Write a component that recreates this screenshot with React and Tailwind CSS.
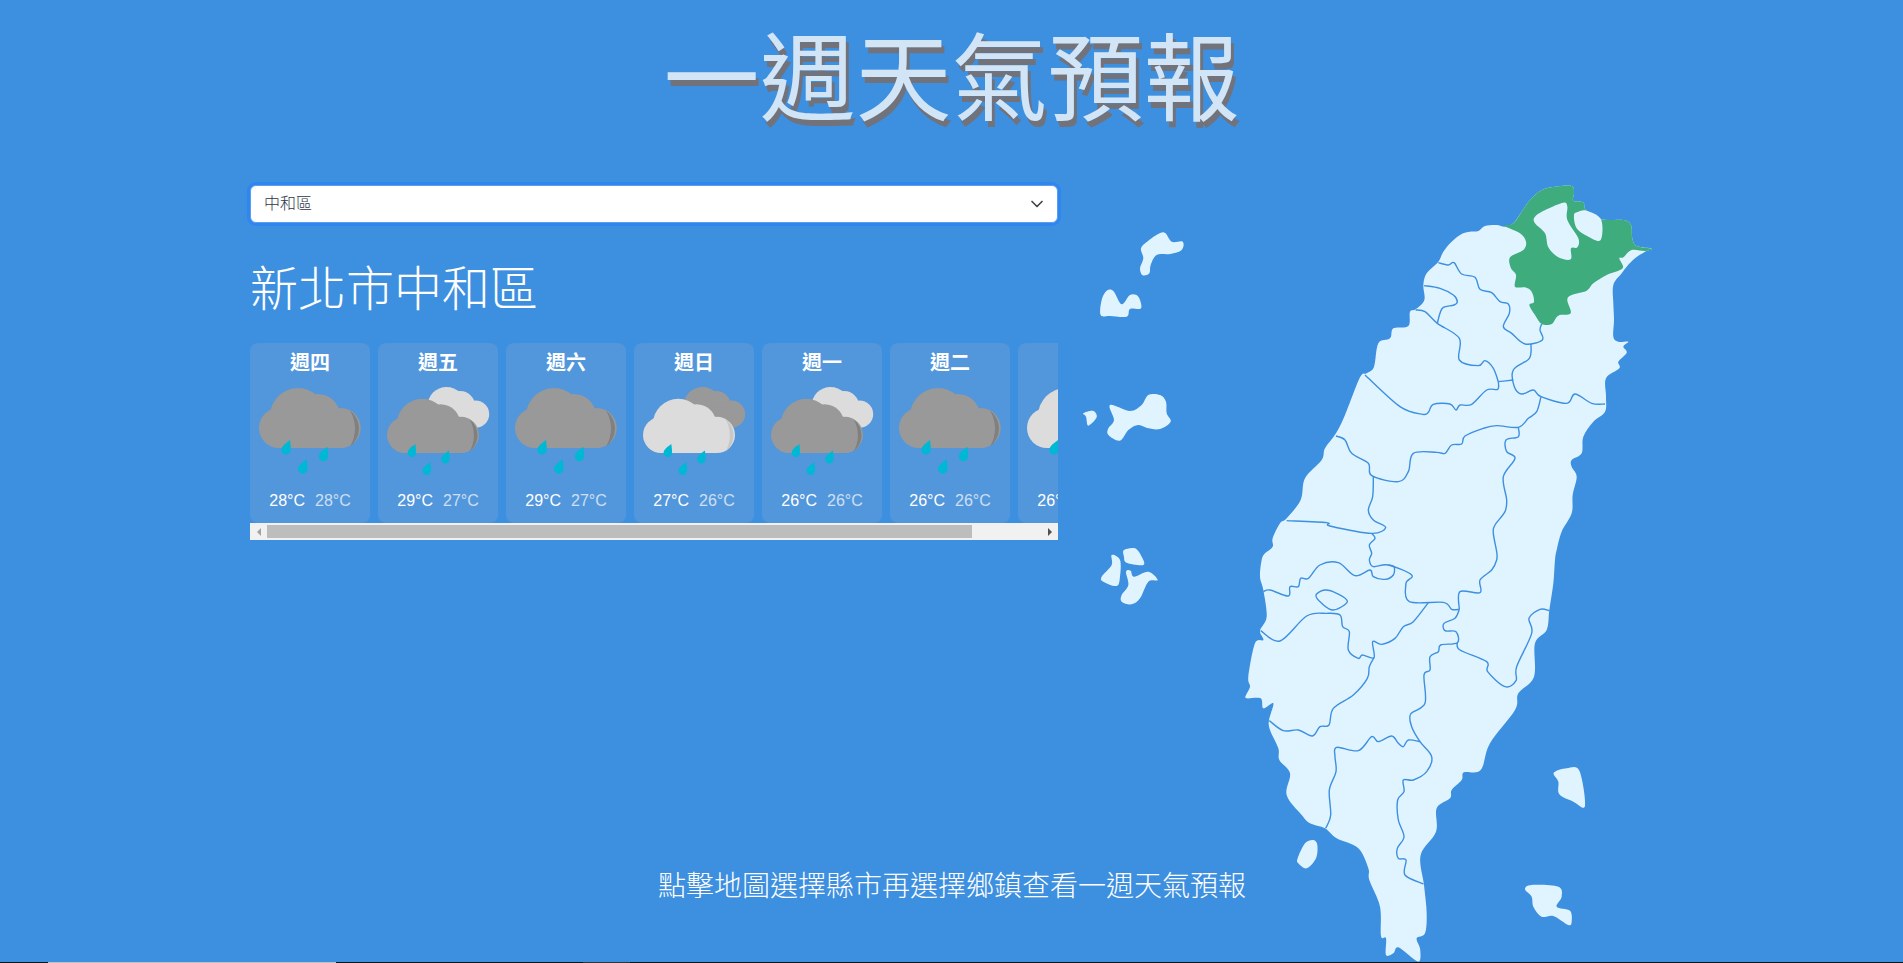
import { ChevronDown } from 'lucide-react';

const CJK = 'font-["Liberation_Sans","Noto_Sans_CJK_TC",sans-serif]';

// map points are read off the reference at 3x: x = (px - 1230) * 3, y = (py - 170) * 3
const south = (pts) => pts.map(([x, y]) => [x, y + 1170]);
const west = (pts) => pts.map(([x, y]) => [x - 510, y + 120]);

const smooth = (pts, closed = true) => {
  const n = pts.length;
  const at = (i) => (closed ? pts[(i + n) % n] : pts[Math.max(0, Math.min(n - 1, i))]);
  let d = `M${pts[0][0]} ${pts[0][1]}`;
  const end = closed ? n : n - 1;
  for (let i = 0; i < end; i++) {
    const [p0, p1, p2, p3] = [at(i - 1), at(i), at(i + 1), at(i + 2)];
    const c1 = [p1[0] + (p2[0] - p0[0]) / 6, p1[1] + (p2[1] - p0[1]) / 6];
    const c2 = [p2[0] - (p3[0] - p1[0]) / 6, p2[1] - (p3[1] - p1[1]) / 6];
    d += `C${c1[0].toFixed(1)} ${c1[1].toFixed(1)} ${c2[0].toFixed(1)} ${c2[1].toFixed(1)} ${p2[0]} ${p2[1]}`;
  }
  return closed ? `${d}Z` : d;
};

const island = [
  [625, 275], [640, 245], [665, 215], [695, 192], [720, 185], [745, 183], [765, 168], [800, 165], [825, 170], [850, 160],
  [875, 125], [900, 90], [935, 60], [975, 50], [1025, 48], [1032, 70], [1030, 92], [1060, 97], [1068, 120], [1115, 148],
  [1180, 150], [1203, 165], [1207, 205], [1220, 228], [1265, 236], [1245, 245], [1215, 265], [1190, 290], [1175, 310],
  [1150, 345], [1150, 400], [1152, 450], [1150, 500], [1165, 515], [1195, 515], [1180, 530], [1190, 548], [1165, 575],
  [1168, 595], [1128, 625], [1128, 680], [1125, 725], [1090, 755], [1060, 800], [1055, 850], [1025, 870], [1025, 890],
  [1040, 920], [1028, 975], [1025, 1030], [995, 1085], [980, 1140],
  ...south([
    [975, 0], [970, 70], [958, 150], [950, 210], [915, 250], [912, 350], [865, 400], [855, 450], [780, 550], [752, 630],
    [702, 637], [695, 660], [665, 690], [660, 715], [620, 745], [618, 815], [572, 885], [582, 975], [590, 1060], [585, 1120],
    [560, 1135], [570, 1165], [570, 1200], [555, 1200], [505, 1162], [490, 1180], [468, 1185], [468, 1135], [453, 1128],
    [450, 1040], [418, 960], [415, 925], [385, 865], [320, 835], [285, 805], [240, 790], [215, 765], [170, 705], [180, 640],
    [148, 600], [145, 565], [120, 510], [117, 480], [130, 430], [100, 445], [92, 415], [50, 415], [48, 405], [60, 380],
    [55, 350], [75, 250], [100, 240], [90, 212], [110, 170], [100, 90], [90, 50], [95, 0],
  ]),
  [105, 1150], [128, 1130], [128, 1105], [150, 1060], [170, 1045], [212, 990], [225, 925], [275, 870], [285, 835], [318, 790],
  [345, 735], [390, 622], [410, 610], [432, 590], [445, 520], [480, 505], [490, 475], [535, 468], [540, 425], [557, 418],
  [583, 390], [580, 345], [590, 310],
];

const newTaipei = [
  [825, 168], [850, 160], [875, 125], [900, 90], [935, 60], [975, 50], [1025, 48], [1032, 70], [1030, 92], [1060, 97],
  [1068, 120], [1115, 148], [1180, 150], [1203, 165], [1207, 205], [1220, 228], [1265, 236], [1245, 243], [1205, 240],
  [1180, 262], [1168, 265], [1178, 295], [1130, 315], [1090, 340], [1070, 362], [1025, 375], [1012, 390], [1022, 430],
  [985, 437], [965, 462], [935, 462], [915, 435], [898, 405], [912, 395], [905, 365], [885, 352], [855, 350], [858, 315],
  [843, 295], [840, 262], [880, 240], [888, 215], [870, 190],
];

const holes = [
  [[915, 140], [950, 118], [1000, 98], [1012, 110], [1012, 150], [1045, 205], [1042, 232], [1023, 235], [1022, 268], [985, 262], [955, 232], [945, 190], [915, 160]],
  [[1032, 135], [1045, 125], [1070, 122], [1113, 148], [1112, 210], [1075, 200], [1040, 175]],
];

const borders = [
  [[625, 278], [655, 285], [672, 278], [695, 312], [735, 322], [750, 358], [785, 368], [810, 395], [835, 402], [838, 430], [820, 470], [845, 490], [885, 522], [937, 510], [930, 480], [935, 462]],
  [[582, 347], [630, 355], [670, 375], [682, 395], [672, 405], [640, 412], [630, 430], [622, 460]],
  [[557, 420], [585, 425], [622, 460], [688, 505], [688, 570], [745, 587], [765, 572], [790, 595], [805, 635]],
  [[903, 522], [898, 565], [850, 600], [853, 650], [875, 672], [910, 660], [933, 680], [1010, 700], [1035, 672], [1085, 700], [1125, 702]],
  [[805, 635], [850, 630]],
  [[805, 635], [803, 658], [770, 660], [725, 703], [690, 705], [678, 720], [660, 702], [610, 703], [595, 727], [578, 733], [510, 710], [405, 615]],
  [[933, 680], [920, 725], [895, 745], [865, 772], [800, 767], [760, 775], [705, 798], [695, 822], [665, 825], [645, 850], [620, 847], [550, 850], [535, 905], [505, 935], [425, 917], [415, 880], [365, 850], [345, 810], [318, 798]],
  [[865, 772], [865, 800], [828, 810], [830, 845], [855, 865], [820, 920], [830, 990], [825, 1025], [795, 1065], [790, 1090], [800, 1145], ...south([[800, 0], [785, 30], [750, 60], [750, 98], [690, 95], [688, 148]])],
  [[430, 920], [428, 980], [415, 1020], [430, 1050], [467, 1072], [425, 1090], [300, 1068], [290, 1058], [170, 1052]],
  [[425, 1090], [435, 1105], [418, 1125], [425, 1150], ...south([[418, 0], [430, 20], [475, 15], [545, 45], [528, 70], [538, 125], [640, 127], [665, 148], [688, 148]])],
  south([[100, 95], [120, 90], [175, 108], [180, 80], [205, 80], [212, 55], [235, 55], [270, 15], [325, 8], [375, 47], [420, 30], [430, 50], [465, 58], [490, 45], [492, 20], [475, 15]]),
  south([[92, 212], [150, 243], [230, 168], [290, 160], [330, 165], [338, 200], [358, 215], [355, 270], [385, 295], [397, 285], [432, 293], [428, 245], [455, 253], [495, 235], [520, 200], [550, 185], [595, 128]]),
  south([[432, 293], [418, 320], [412, 355], [370, 405], [310, 445], [297, 495], [270, 500], [247, 528], [205, 510], [160, 512], [118, 482]]),
  south([[688, 148], [675, 175], [642, 190], [645, 212], [678, 215], [682, 248], [632, 255], [625, 275], [600, 290], [600, 330], [582, 345], [585, 430], [542, 462], [545, 500], [570, 545], [605, 590], [590, 635], [550, 660], [520, 660], [522, 695], [503, 720], [505, 780], [522, 830], [502, 865], [505, 895], [528, 900], [525, 945], [580, 972]]),
  south([[570, 545], [535, 540], [520, 560], [505, 550], [485, 528], [445, 545], [425, 530], [385, 572], [320, 562], [315, 590], [318, 635], [298, 690], [302, 765], [287, 805]]),
  south([[682, 248], [690, 270], [770, 305], [773, 335], [825, 380], [858, 362], [860, 320], [905, 220], [897, 175], [930, 148], [958, 152]]),
];

const chiayiCity = south([[258, 105], [285, 90], [320, 100], [352, 125], [310, 150], [275, 130]]);

const islets = [
  south([[975, 635], [1010, 625], [1048, 632], [1065, 738], [1030, 725], [988, 703], [985, 665], [972, 645]]),
  south([[885, 988], [905, 975], [985, 980], [995, 1010], [980, 1040], [1020, 1052], [1025, 1085], [1015, 1095], [970, 1068], [935, 1070], [910, 1040], [905, 1010]]),
  south([[203, 895], [225, 850], [250, 840], [262, 855], [258, 895], [230, 925], [205, 910]]),
  west([[243, 115], [265, 92], [310, 67], [335, 95], [368, 95], [365, 120], [330, 132], [290, 135], [272, 165], [268, 190], [248, 196], [240, 175], [250, 145]]),
  west([[122, 315], [125, 270], [140, 242], [160, 243], [185, 283], [210, 255], [235, 260], [243, 295], [210, 297], [200, 320], [150, 318]]),
  west([[70, 610], [100, 603], [110, 622], [85, 647], [78, 620]]),
  west([[150, 585], [210, 603], [245, 585], [265, 555], [300, 555], [318, 575], [320, 610], [332, 635], [300, 657], [265, 655], [235, 645], [205, 660], [180, 692], [145, 675], [145, 655], [162, 630]]),
  west([[155, 1035], [180, 1050], [180, 1100], [170, 1128], [130, 1115], [125, 1100], [155, 1065]]),
  west([[192, 1020], [225, 1015], [245, 1040], [250, 1065], [200, 1058], [192, 1040]]),
  west([[198, 1085], [212, 1082], [222, 1100], [265, 1085], [293, 1110], [265, 1115], [240, 1165], [215, 1183], [185, 1175], [185, 1155], [205, 1125]]),
];

const TaiwanMap = () => (
  <svg viewBox="-450 30 1800 2346" className="w-[600px] h-[782px] shrink-0">
    <path d={smooth(island)} fill="#e0f4ff" />
    {islets.map((pts, i) => (
      <path key={i} d={smooth(pts)} fill="#e0f4ff" />
    ))}
    <path d={smooth(newTaipei)} fill="#3fac7d" />
    {holes.map((pts, i) => (
      <path key={i} d={smooth(pts)} fill="#e0f4ff" />
    ))}
    <g fill="none" stroke="#3d8fe0" strokeWidth="4.2" strokeLinejoin="round">
      {borders.map((pts, i) => (
        <path key={i} d={smooth(pts, false)} />
      ))}
      <path d={smooth(chiayiCity)} />
    </g>
  </svg>
);

const DARK = { body: '#999999', shade: '#808080' };
const LIGHT = { body: '#dcdcdc', shade: '#c8c8c8' };

const Cloud = ({ tone, transform, shaded = true }) => (
  <g transform={transform}>
    <g fill={tone.body}>
      <circle cx="29" cy="85" r="20" />
      <circle cx="48" cy="73" r="28" />
      <circle cx="68" cy="73" r="22" />
      <circle cx="90.7" cy="85" r="20" />
      <rect x="29" y="75" width="62" height="30" />
    </g>
    {shaded ? <path d="M100 67.5A22.5 22.5 0 0 1 100 103.5A35 35 0 0 0 100 67.5Z" fill={tone.shade} /> : null}
  </g>
);

const Drop = ({ x, y, s = 1 }) => (
  <path
    transform={`translate(${x} ${y}) scale(${s})`}
    d="M4 -10C4.4 -6 5.2 -2.5 4.7 0.5A4.7 4.7 0 1 1 -3.9 -2.8C-2.4 -5.6 1.2 -7.6 4 -10Z"
    fill="#00b8d4"
  />
);

const WeatherIcon = ({ front, back }) => (
  <svg viewBox="0 35 120 100" className="w-[120px] h-[100px] mt-[3px]">
    {back ? (
      <>
        <Cloud tone={back} shaded={false} transform="translate(35.9 13.4) scale(0.68)" />
        <Cloud tone={front} transform="translate(0.85 15) scale(0.905)" />
        <Drop x={33.7} y={110} s={0.9} />
        <Drop x={67.3} y={116.6} s={0.9} />
        <Drop x={48.7} y={128} s={0.9} />
      </>
    ) : (
      <>
        <Cloud tone={front} />
        <Drop x={36} y={107} />
        <Drop x={73.3} y={113.7} />
        <Drop x={52.7} y={126.3} />
      </>
    )}
  </svg>
);

const days = [
  { day: '週四', hi: 28, lo: 28, front: DARK },
  { day: '週五', hi: 29, lo: 27, front: DARK, back: LIGHT },
  { day: '週六', hi: 29, lo: 27, front: DARK },
  { day: '週日', hi: 27, lo: 26, front: LIGHT, back: DARK },
  { day: '週一', hi: 26, lo: 26, front: DARK, back: LIGHT },
  { day: '週二', hi: 26, lo: 26, front: DARK },
  { day: '週三', hi: 26, lo: 26, front: LIGHT },
];

const DayCard = ({ day, hi, lo, front, back }) => (
  <div className="w-[120px] h-[180px] shrink-0 rounded-lg bg-[#5296dc] pt-2 flex flex-col items-center text-white">
    <div className="text-xl leading-6 font-bold">{day}</div>
    <WeatherIcon front={front} back={back} />
    <div className="mt-[11px] flex gap-[10px] text-base leading-6">
      <span>{hi}°C</span>
      <span className="opacity-70">{lo}°C</span>
    </div>
  </div>
);

const ScrollBar = () => (
  <div className="h-[17px] bg-[#f1f1f1] flex items-center">
    <div className="w-[17px] flex justify-center">
      <div className="border-y-[4px] border-r-[4px] border-y-transparent border-r-[#a3a3a3]" />
    </div>
    <div className="w-[705px] h-[13px] bg-[#bdbdbd]" />
    <div className="flex-1 flex justify-end pr-[6px]">
      <div className="border-y-[4px] border-l-[4px] border-y-transparent border-l-[#505050]" />
    </div>
  </div>
);

export default function App() {
  return (
    <div className={`${CJK} w-full bg-[#3d8fe0]`}>
      <div className="h-[962px] overflow-hidden">
        <h1 className="h-[180px] pt-[8px] text-center text-[96px] leading-[144px] font-normal text-[#d2e5f7] [text-shadow:3px_6px_0_#72727a]">
          一週天氣預報
        </h1>
        <div className="flex h-[782px] gap-[22px] pl-[250px]">
          <div className="w-[808px] shrink-0 flex flex-col">
            <div className="mt-[5px] h-[38px] rounded-md bg-white border border-[#5b9ef0] ring-[3px] ring-[#2f86ee] pl-[13px] pr-[10px] flex items-center justify-between text-base font-light text-[#2d3748]">
              <span>中和區</span>
              <ChevronDown className="w-5 h-5 text-[#444444]" />
            </div>
            <h2 className="mt-[31px] text-5xl leading-[72px] font-light text-white">新北市中和區</h2>
            <div className="mt-[17px] flex gap-2 overflow-hidden">
              {days.map((d) => (
                <DayCard key={d.day} {...d} />
              ))}
            </div>
            <ScrollBar />
            <div className="mt-auto mb-[54px] ml-[408px] whitespace-nowrap text-[28px] leading-[42px] font-light text-white">
              點擊地圖選擇縣市再選擇鄉鎮查看一週天氣預報
            </div>
          </div>
          <TaiwanMap />
        </div>
      </div>
      <div className="h-px flex bg-[#04141a]">
        <div className="w-[48px]" />
        <div className="w-[288px] bg-[#c0c0c0]" />
        <div className="w-[247px]" />
        <div className="w-[47px] bg-[#333333]" />
      </div>
    </div>
  );
}
